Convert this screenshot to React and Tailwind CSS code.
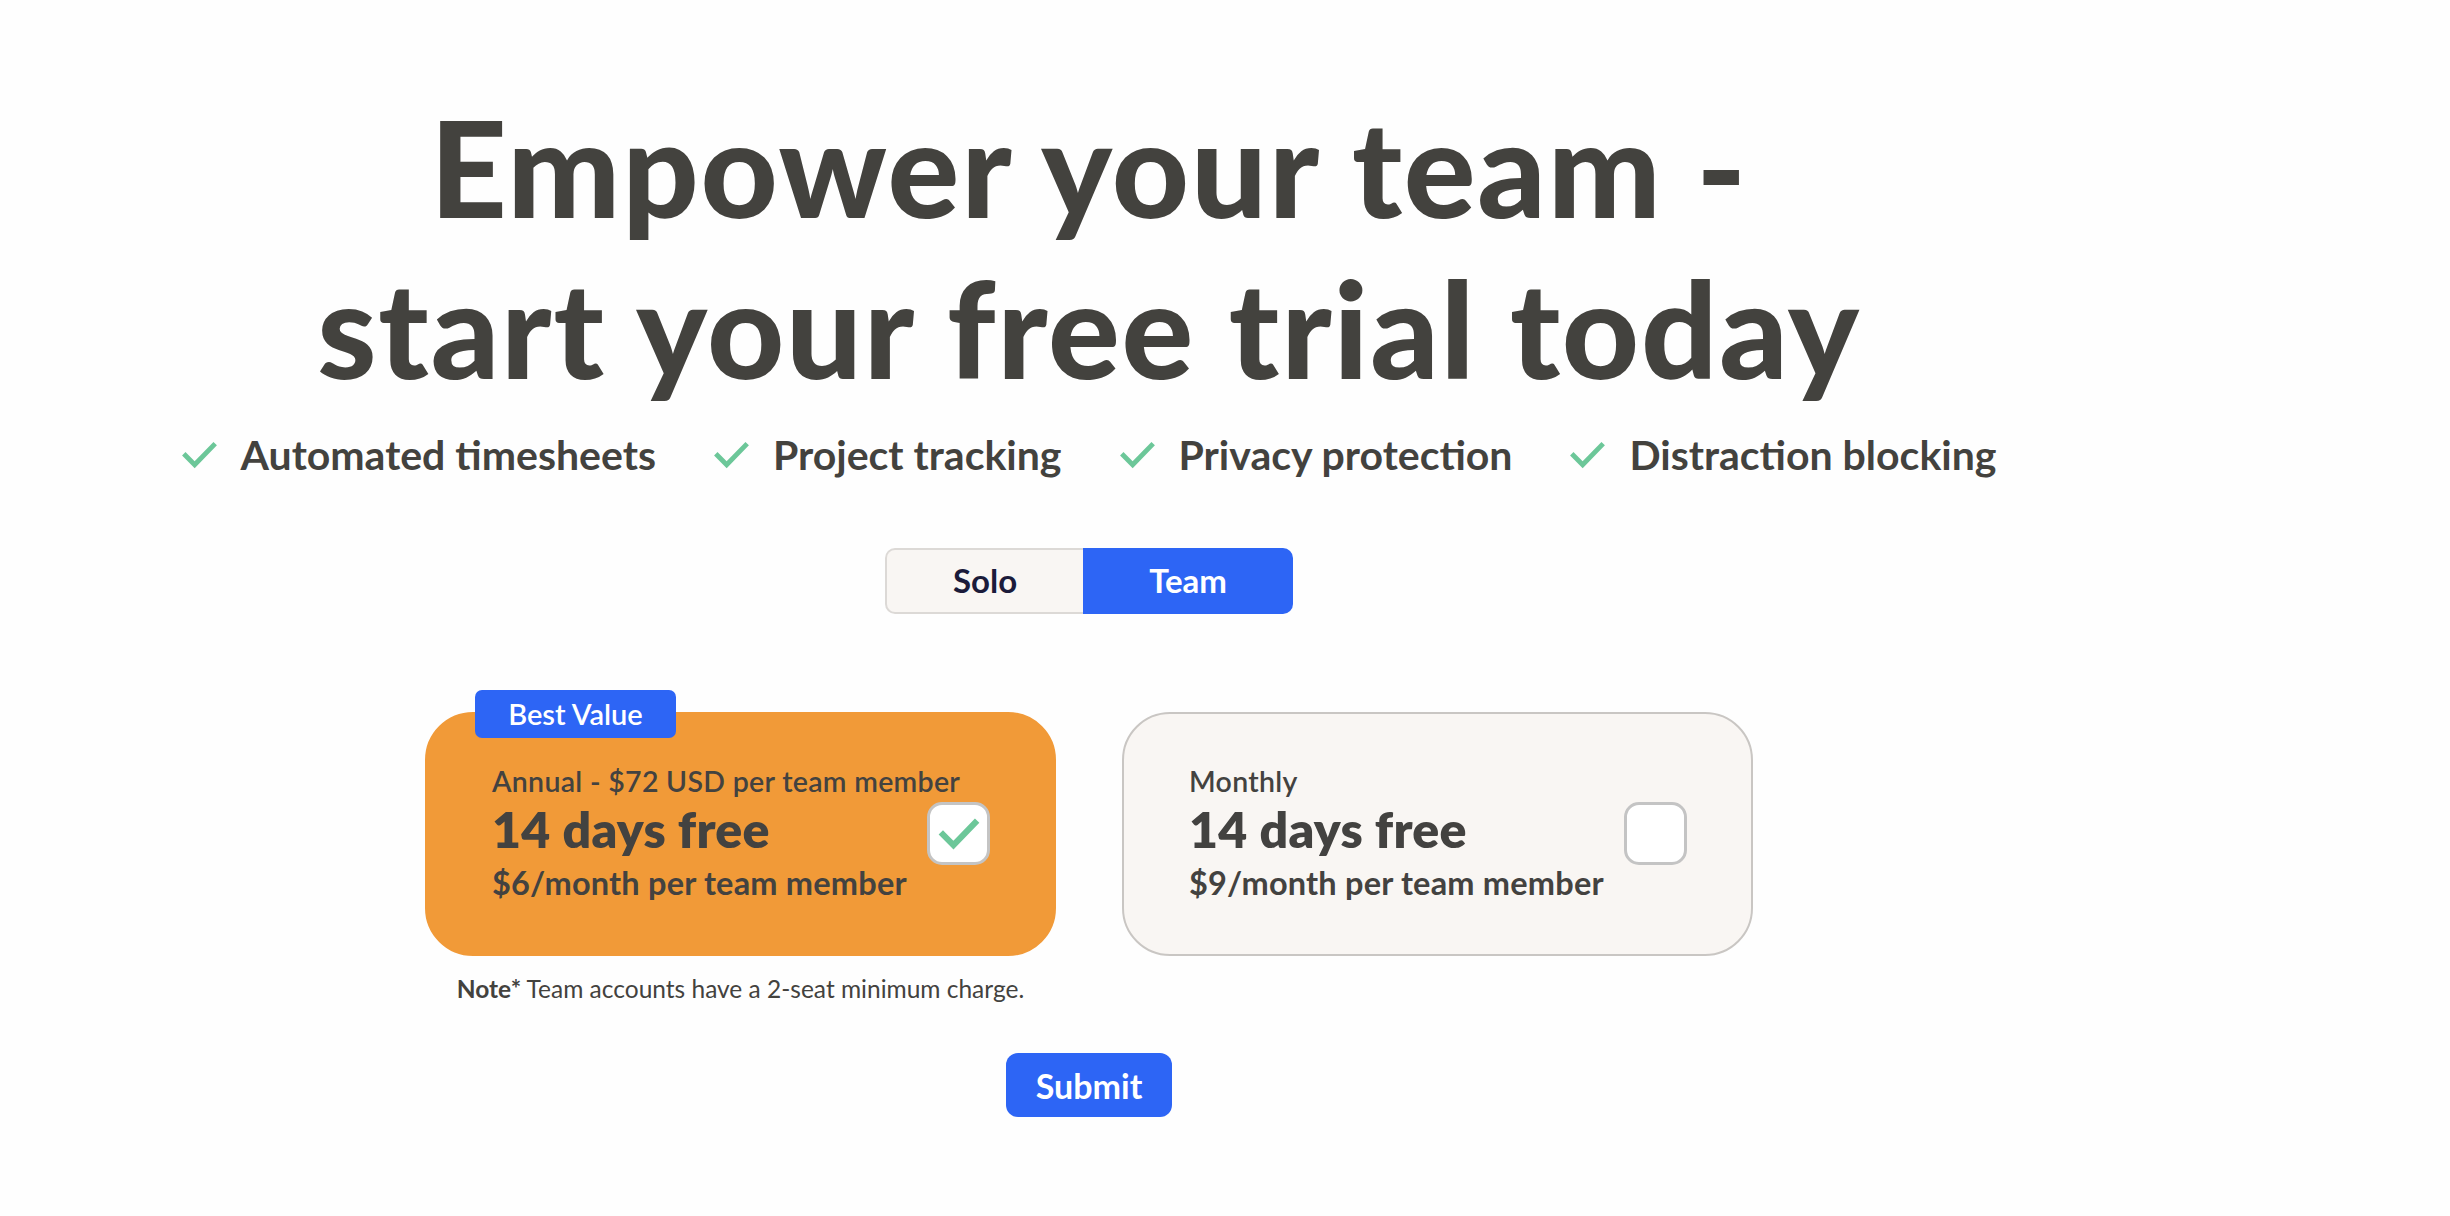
import { useState } from "react";

const features = [
  "Automated timesheets",
  "Project tracking",
  "Privacy protection",
  "Distraction blocking",
];

const Check = ({ className, width = 4.5 }) => (
  <svg viewBox="0 0 32 26" fill="none" className={className}>
    <path
      d="M3 13.5 L11.5 22 L29 4"
      stroke="currentColor"
      strokeWidth={width}
      strokeLinecap="square"
    />
  </svg>
);

const PlanCard = ({ label, price, selected, badge, onClick }) => (
  <button
    onClick={onClick}
    className={`relative flex h-[244px] w-[631px] items-center rounded-[48px] border-2 pl-[65px] pr-[64px] text-left ${
      selected
        ? "border-[#f19a38] bg-[#f19a38]"
        : "border-[#c9c6c3] bg-[#f9f6f3]"
    }`}
  >
    {badge && (
      <span className="absolute -top-[24px] left-[48px] flex h-[48px] w-[201px] items-center justify-center rounded-[7px] bg-[#2d65f5] text-[29px] font-semibold text-white">
        {badge}
      </span>
    )}
    <div className="flex min-w-0 flex-1 flex-col whitespace-nowrap text-[#434240]">
      <span className="text-[28.5px] font-semibold leading-[38px] tracking-[0.3px]">
        {label}
      </span>
      <span className="text-[50px] font-extrabold leading-[58px] tracking-[0.3px]">
        14 days free
      </span>
      <span className="mt-[3px] text-[32.5px] font-bold leading-[44px] tracking-[0.2px]">
        {price}
      </span>
    </div>
    <span className="flex h-[63px] w-[63px] shrink-0 items-center justify-center rounded-[15px] border-[3px] border-[#c4c4c4] bg-white text-[#6cc799]">
      {selected && <Check className="h-[32px] w-[42px]" width={5} />}
    </span>
  </button>
);

export default function App() {
  const [mode, setMode] = useState("team");
  const [plan, setPlan] = useState("annual");

  return (
    <div
      className="min-h-screen bg-[#fefefe]"
      style={{ fontFamily: "Lato, 'Noto Sans', sans-serif" }}
    >
      <div className="flex w-[2178px] flex-col items-center pt-[86px]">
        {/* Heading */}
        <h1 className="text-center text-[134px] font-black leading-[161px] tracking-[1.8px] text-[#43423e]">
          Empower your team -
          <br />
          start your free trial today
        </h1>

        {/* Feature list */}
        <ul className="mt-[16px] flex items-center gap-[58px]">
          {features.map((f) => (
            <li key={f} className="flex items-center gap-[24px]">
              <Check className="h-[28px] w-[35px] text-[#6cc799]" />
              <span className="text-[41px] font-bold text-[#43423e]">{f}</span>
            </li>
          ))}
        </ul>

        {/* Solo / Team toggle */}
        <div className="mt-[62px] flex h-[66px]">
          <button
            onClick={() => setMode("solo")}
            className={`rounded-l-[10px] px-[66px] text-[33px] font-bold ${
              mode === "solo"
                ? "bg-[#2d65f5] text-white"
                : "border-2 border-r-0 border-[#dcd9d6] bg-[#f9f6f3] text-[#1b1b3a]"
            }`}
          >
            Solo
          </button>
          <button
            onClick={() => setMode("team")}
            className={`rounded-r-[10px] px-[66px] text-[33px] font-bold ${
              mode === "team"
                ? "bg-[#2d65f5] text-white"
                : "border-2 border-l-0 border-[#dcd9d6] bg-[#f9f6f3] text-[#1b1b3a]"
            }`}
          >
            Team
          </button>
        </div>

        {/* Plans */}
        <div className="mt-[98px] flex items-start gap-[66px]">
          <div className="flex flex-col items-center">
            <PlanCard
              label="Annual - $72 USD per team member"
              price="$6/month per team member"
              badge="Best Value"
              selected={plan === "annual"}
              onClick={() => setPlan("annual")}
            />
            <p className="mt-[15px] text-[24.5px] text-[#43423e]">
              <span className="font-bold">Note*</span> Team accounts have a
              2-seat minimum charge.
            </p>
          </div>
          <PlanCard
            label="Monthly"
            price="$9/month per team member"
            selected={plan === "monthly"}
            onClick={() => setPlan("monthly")}
          />
        </div>

        {/* Submit */}
        <button className="mt-[46px] h-[64px] rounded-[12px] bg-[#2d65f5] px-[30px] text-[34px] font-bold text-white">
          Submit
        </button>
      </div>
    </div>
  );
}
